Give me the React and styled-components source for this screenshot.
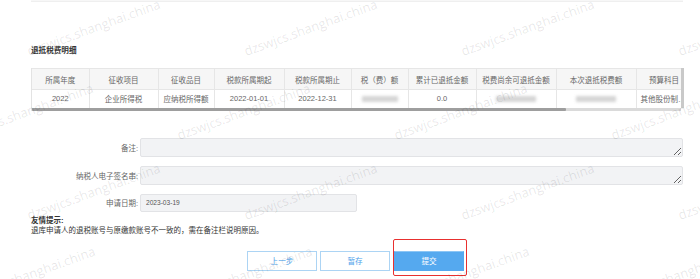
import React from "react";
import styled, { createGlobalStyle } from "styled-components";

const Global = createGlobalStyle`
  html, body { margin: 0; padding: 0; background: #fff; }
  body { font-family: "Liberation Sans", "Noto Sans CJK SC", sans-serif; color: #333; }
  * { box-sizing: border-box; }
`;

const Page = styled.div`
  position: relative;
  width: 700px;
  height: 279px;
  overflow: hidden;
  padding: 0 17px 0 31px;
`;

const TopStrip = styled.div`
  height: 2px;
  background: #f7f7f7;
  border-bottom: 1px solid #efefef;
`;

const SectionTitle = styled.div`
  margin-top: 43px;
  font-size: 7.6px;
  line-height: 12px;
  font-weight: bold;
  color: #333;
`;

const TableFrame = styled.div`
  position: relative;
  margin-top: 11px;
  width: 653px;
  padding-right: 3px;
`;

const TableViewport = styled.div`
  width: 650px;
  overflow: hidden;
  border-left: 1px solid #e3e3e3;
`;

const Table = styled.table`
  border-collapse: collapse;
  table-layout: fixed;
  width: 792px;
  font-size: 7.5px;
  color: #666;
`;

const Th = styled.th`
  height: 21px;
  background: #f6f6f6;
  border: 1px solid #e6e6e6;
  border-left: none;
  font-weight: normal;
  color: #666;
  text-align: center;
  padding: 0 4px;
  white-space: nowrap;
`;

const Td = styled.td`
  height: 18px;
  border-right: 1px solid #e6e6e6;
  text-align: ${(p) => (p.$left ? "left" : "center")};
  padding: 0 4px;
  white-space: nowrap;
  overflow: hidden;
  text-overflow: ellipsis;
`;

const Blurred = styled.span`
  display: inline-block;
  width: ${(p) => p.$w}px;
  height: 6px;
  background: #c4c4c4;
  filter: blur(1.6px);
  opacity: 0.7;
  vertical-align: middle;
`;

const VScroll = styled.div`
  position: absolute;
  right: 0;
  top: 0;
  width: 3px;
  height: 40px;
  background: #c9c9c9;
`;

const HScroll = styled.div`
  height: 3px;
  width: 650px;
  background: #dadada;
  display: flex;
`;

const HThumb = styled.div`
  width: 534px;
  height: 3px;
  background: #9e9e9e;
  border-radius: 1px;
`;

const Form = styled.div`
  margin-top: 27px;
  display: grid;
  grid-template-columns: 107px 1fr;
  column-gap: 2px;
  row-gap: 9px;
  align-items: center;
`;

const Label = styled.div`
  font-size: 7.5px;
  color: #666;
  text-align: right;
  white-space: nowrap;
`;

const Area = styled.textarea`
  display: block;
  width: 543px;
  height: 19px;
  background: #f2f3f5;
  border: 1px solid #e2e3e6;
  border-radius: 2px;
  font-size: 7.5px;
  padding: 2px 5px;
  margin: 0;
  resize: vertical;
  outline: none;
`;

const DateBox = styled.div`
  width: 217px;
  height: 18px;
  background: #f2f3f5;
  border: 1px solid #e2e3e6;
  border-radius: 2px;
  font-size: 6.6px;
  color: #555;
  display: flex;
  align-items: center;
  padding-left: 5px;
`;

const Tips = styled.div`
  margin-top: 4px;
  font-size: 7.5px;
  line-height: 10px;
  color: #333;
`;

const TipTitle = styled.div`
  font-weight: bold;
`;

const Buttons = styled.div`
  margin-top: 15px;
  padding-left: 216px;
  display: flex;
  gap: 3px;
`;

const Btn = styled.div`
  position: relative;
  width: 70px;
  height: 20px;
  display: flex;
  align-items: center;
  justify-content: center;
  font-size: 7.6px;
  border: 1px solid ${(p) => (p.$primary ? "#55a9ef" : "#acd4f4")};
  background: ${(p) => (p.$primary ? "#55a9ef" : "#fff")};
  color: ${(p) => (p.$primary ? "#fff" : "#4ea2ea")};
  border-top-color: ${(p) => (p.$primary ? "#8cc6f5" : "#acd4f4")};
  margin-left: ${(p) => (p.$primary ? "1px" : "0")};
`;

const Highlight = styled.div`
  position: absolute;
  left: -2px;
  top: -13px;
  width: 74px;
  height: 37px;
  border: 1.5px solid #e8302f;
  border-radius: 2px;
  pointer-events: none;
`;

const MarkLayer = styled.div`
  position: absolute;
  inset: 0;
  pointer-events: none;
  overflow: hidden;
`;

const Mark = styled.span`
  position: absolute;
  font-family: "Open Sans", "Liberation Sans", sans-serif;
  font-size: 13px;
  line-height: 14px;
  color: rgba(0, 0, 0, 0.1);
  white-space: nowrap;
  transform-origin: left bottom;
  transform: rotate(-20deg);
`;

const cols = [57, 69, 56, 70, 67, 57, 68, 80, 80, 56];
const headers = [
  "所属年度",
  "征收项目",
  "征收品目",
  "税款所属期起",
  "税款所属期止",
  "税（费）额",
  "累计已退抵金额",
  "税费尚余可退抵金额",
  "本次退抵税费额",
  "预算科目",
];

const marks = [];
const rows = [
  { y: 58, x0: 30 },
  { y: 142, x0: -37 },
  { y: 222, x0: 30 },
  { y: 305, x0: -35 },
];
rows.forEach((r) => {
  for (let k = 0; k < 4; k++) {
    const x = r.x0 + 217 * k;
    if (x > -60 && x < 690) marks.push({ x, y: r.y });
  }
});

export default function App() {
  return (
    <>
      <Global />
      <Page>
        <TopStrip />
        <SectionTitle>退抵税费明细</SectionTitle>
        <TableFrame>
          <TableViewport>
            <Table>
              <colgroup>
                {cols.map((w, i) => (
                  <col key={i} style={{ width: w }} />
                ))}
                <col style={{ width: 132 }} />
              </colgroup>
              <thead>
                <tr>
                  {headers.map((h) => (
                    <Th key={h}>{h}</Th>
                  ))}
                  <Th />
                </tr>
              </thead>
              <tbody>
                <tr>
                  <Td>2022</Td>
                  <Td>企业所得税</Td>
                  <Td>应纳税所得额</Td>
                  <Td>2022-01-01</Td>
                  <Td>2022-12-31</Td>
                  <Td>
                    <Blurred $w={36} />
                  </Td>
                  <Td>0.0</Td>
                  <Td>
                    <Blurred $w={40} />
                  </Td>
                  <Td>
                    <Blurred $w={40} />
                  </Td>
                  <Td $left>其他股份制企业</Td>
                  <Td />
                </tr>
              </tbody>
            </Table>
            <HScroll>
              <HThumb />
            </HScroll>
          </TableViewport>
          <VScroll />
        </TableFrame>

        <Form>
          <Label>备注:</Label>
          <Area readOnly defaultValue="" />
          <Label>纳税人电子签名串:</Label>
          <Area readOnly defaultValue="" />
          <Label>申请日期:</Label>
          <DateBox>2023-03-19</DateBox>
        </Form>

        <Tips>
          <TipTitle>友情提示:</TipTitle>
          <div>退库申请人的退税账号与原缴款账号不一致的，需在备注栏说明原因。</div>
        </Tips>

        <Buttons>
          <Btn>上一步</Btn>
          <Btn>暂存</Btn>
          <Btn $primary>
            提交
            <Highlight />
          </Btn>
        </Buttons>

        <MarkLayer>
          {marks.map((m, i) => (
            <Mark key={i} style={{ left: m.x, top: m.y - 14 }}>
              dzswjcs.shanghai.china
            </Mark>
          ))}
        </MarkLayer>
      </Page>
    </>
  );
}
